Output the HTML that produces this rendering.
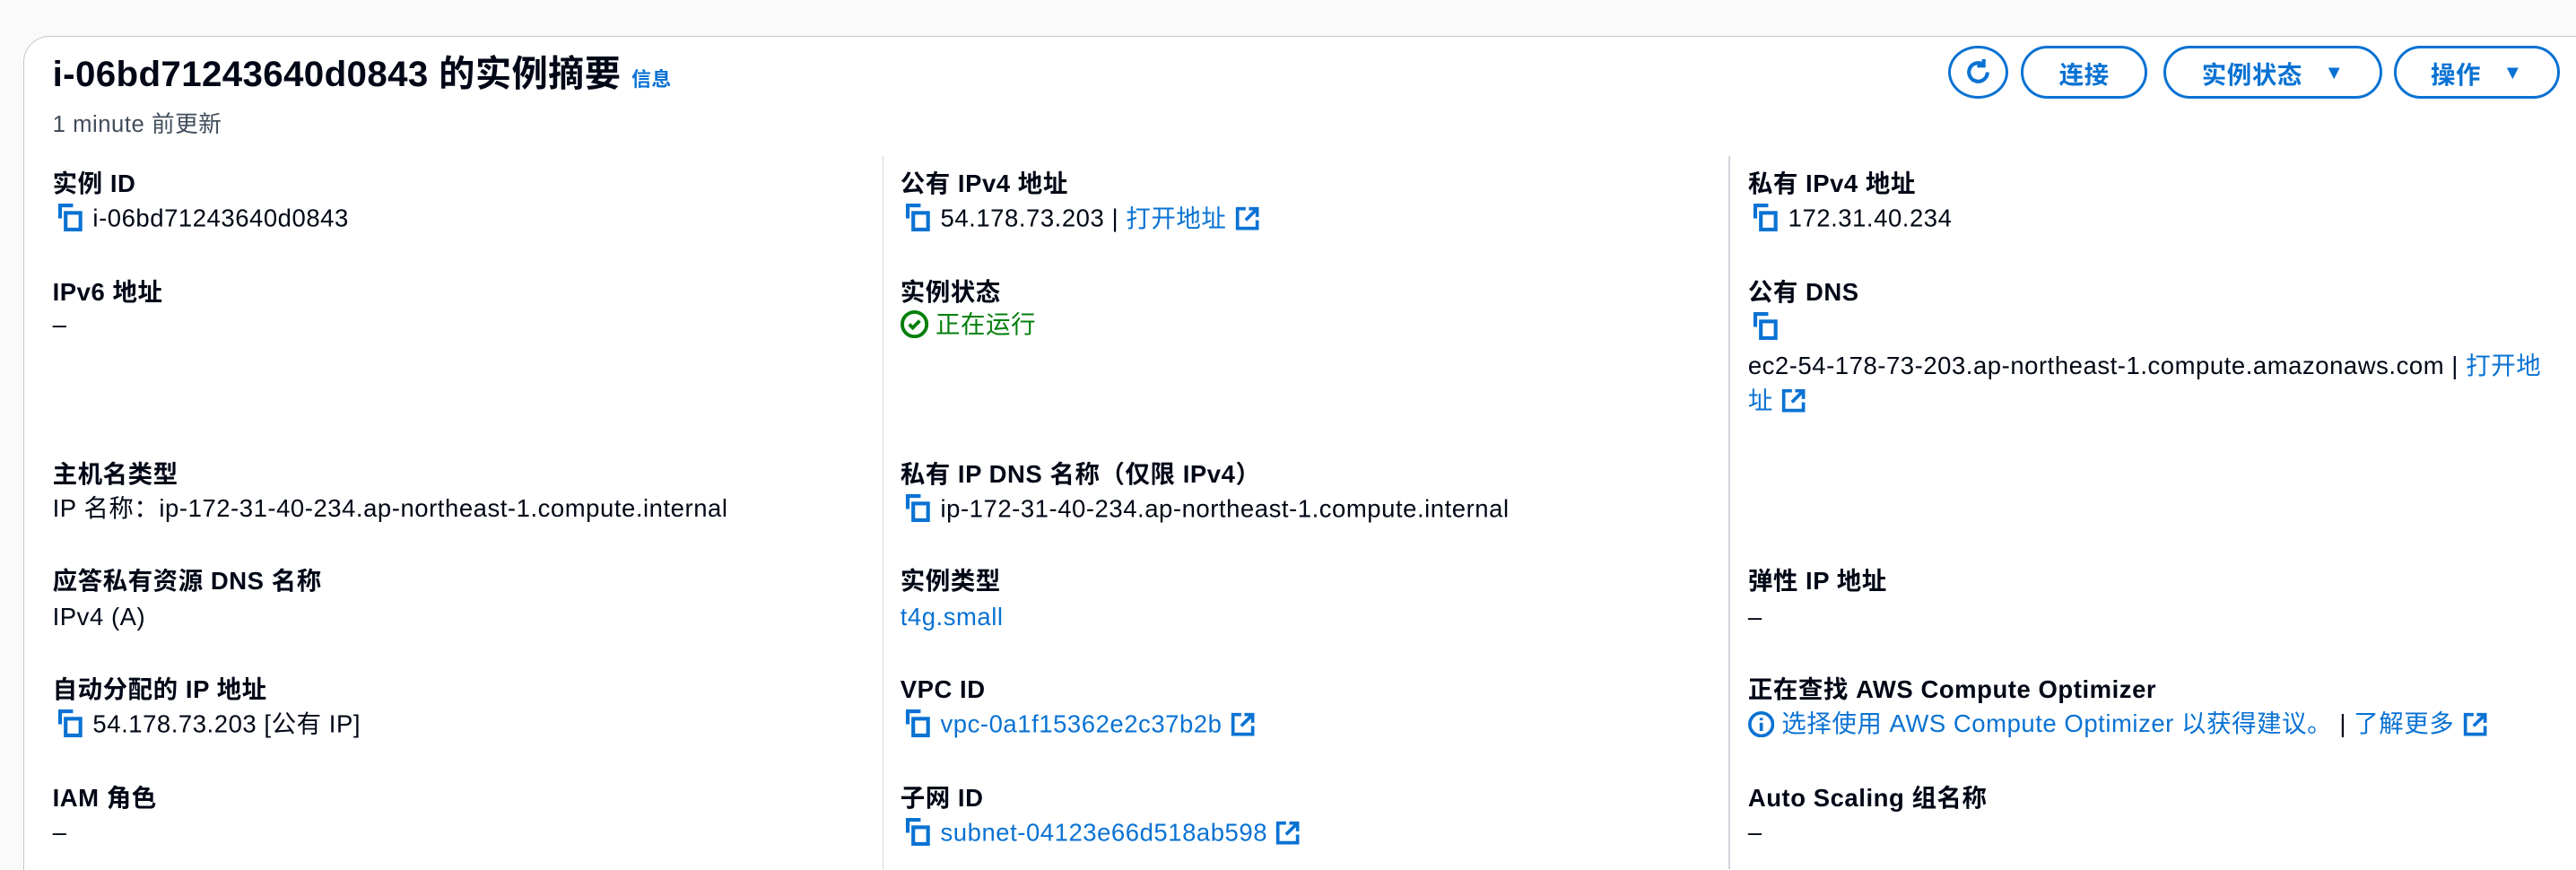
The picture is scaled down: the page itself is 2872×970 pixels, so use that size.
<!DOCTYPE html>
<html><head><meta charset="utf-8"><style>
html{margin:0;padding:0;background:#fafafa;width:2872px;height:970px;overflow:hidden;}
body{margin:0;padding:0;background:#fafafa;width:1568px;height:529px;overflow:hidden;zoom:1.8316;position:relative;font-family:"Liberation Sans","Noto Sans CJK SC",sans-serif;color:#000716;font-size:15px;letter-spacing:0.3px;}
.card{position:absolute;left:14px;top:22px;width:1600px;height:507px;background:#fff;border:1px solid #c6c6cd;border-bottom:none;border-radius:16px 16px 0 0;}
.a{position:absolute;white-space:nowrap;line-height:20px;}
.l{font-weight:bold;}
.b{color:#0972d3;}
.g{color:#037f0c;}
.div{position:absolute;top:95px;width:1px;height:434px;background:#d1d5db;}
.btn{position:absolute;top:28px;height:29px;border:2px solid #0972d3;border-radius:18px;color:#0972d3;font-weight:bold;font-size:15px;display:flex;align-items:center;justify-content:center;box-sizing:content-box;}
svg{vertical-align:-3px;}
</style></head><body>
<div class="card"></div>
<div class="a" style="left:32px;top:32px;font-size:22px;line-height:26px;font-weight:bold;letter-spacing:0.2px;">i-06bd71243640d0843 的实例摘要 <span class="b" style="font-size:12px;font-weight:bold;">信息</span></div>
<div class="a" style="left:32px;top:66px;color:#414d5c;font-size:14px;">1 minute 前更新</div>

<div class="btn" style="left:1186px;width:33px;border-radius:50%;"><svg width="18" height="18" viewBox="0 0 16 16" fill="none" stroke="#0972d3" stroke-width="2"><path d="M13 8a5 5 0 1 1-2-4"/><path d="M11 1v3.5H7.5"/></svg></div>
<div class="btn" style="left:1230px;width:74px;">连接</div>
<div class="btn" style="left:1317px;width:130px;">实例状态&nbsp;&nbsp;&nbsp;<span style="font-size:12px">▼</span></div>
<div class="btn" style="left:1457px;width:98px;">操作&nbsp;&nbsp;&nbsp;<span style="font-size:12px">▼</span></div>

<div class="div" style="left:537px"></div>
<div class="div" style="left:1052px"></div>

<!-- col1 -->
<div class="a l" style="left:32px;top:102px">实例 ID</div>
<div class="a" style="left:32px;top:123px"><svg width="20" height="18" viewBox="0 0 16 16" fill="none" stroke="#0972d3" stroke-width="2"><path d="M3 9V2h7"/><rect x="6" y="6" width="8" height="9"/></svg> i-06bd71243640d0843</div>
<div class="a l" style="left:32px;top:168px">IPv6 地址</div>
<div class="a" style="left:32px;top:188px">–</div>
<div class="a l" style="left:32px;top:279px">主机名类型</div>
<div class="a" style="left:32px;top:300px">IP 名称：ip-172-31-40-234.ap-northeast-1.compute.internal</div>
<div class="a l" style="left:32px;top:344px">应答私有资源 DNS 名称</div>
<div class="a" style="left:32px;top:366px">IPv4 (A)</div>
<div class="a l" style="left:32px;top:410px">自动分配的 IP 地址</div>
<div class="a" style="left:32px;top:431px"><svg width="20" height="18" viewBox="0 0 16 16" fill="none" stroke="#0972d3" stroke-width="2"><path d="M3 9V2h7"/><rect x="6" y="6" width="8" height="9"/></svg> 54.178.73.203 [公有 IP]</div>
<div class="a l" style="left:32px;top:476px">IAM 角色</div>
<div class="a" style="left:32px;top:497px">–</div>

<!-- col2 -->
<div class="a l" style="left:548px;top:102px">公有 IPv4 地址</div>
<div class="a" style="left:548px;top:123px"><svg width="20" height="18" viewBox="0 0 16 16" fill="none" stroke="#0972d3" stroke-width="2"><path d="M3 9V2h7"/><rect x="6" y="6" width="8" height="9"/></svg> 54.178.73.203 | <span class="b">打开地址 <svg width="16" height="16" viewBox="0 0 16 16" fill="none" stroke="#0972d3" stroke-width="2"><path d="M14 9v5H2V2h5"/><path d="M9 2h5v5M14 2L7 9"/></svg></span></div>
<div class="a l" style="left:548px;top:168px">实例状态</div>
<div class="a g" style="left:548px;top:188px"><svg width="17" height="17" viewBox="0 0 16 16" fill="none" stroke="#037f0c" stroke-width="2"><circle cx="8" cy="8" r="7"/><path d="M5 8l2 2 4-4"/></svg> 正在运行</div>
<div class="a l" style="left:548px;top:279px">私有 IP DNS 名称（仅限 IPv4）</div>
<div class="a" style="left:548px;top:300px"><svg width="20" height="18" viewBox="0 0 16 16" fill="none" stroke="#0972d3" stroke-width="2"><path d="M3 9V2h7"/><rect x="6" y="6" width="8" height="9"/></svg> ip-172-31-40-234.ap-northeast-1.compute.internal</div>
<div class="a l" style="left:548px;top:344px">实例类型</div>
<div class="a b" style="left:548px;top:366px">t4g.small</div>
<div class="a l" style="left:548px;top:410px">VPC ID</div>
<div class="a b" style="left:548px;top:431px"><svg width="20" height="18" viewBox="0 0 16 16" fill="none" stroke="#0972d3" stroke-width="2"><path d="M3 9V2h7"/><rect x="6" y="6" width="8" height="9"/></svg> vpc-0a1f15362e2c37b2b <svg width="16" height="16" viewBox="0 0 16 16" fill="none" stroke="#0972d3" stroke-width="2"><path d="M14 9v5H2V2h5"/><path d="M9 2h5v5M14 2L7 9"/></svg></div>
<div class="a l" style="left:548px;top:476px">子网 ID</div>
<div class="a b" style="left:548px;top:497px"><svg width="20" height="18" viewBox="0 0 16 16" fill="none" stroke="#0972d3" stroke-width="2"><path d="M3 9V2h7"/><rect x="6" y="6" width="8" height="9"/></svg> subnet-04123e66d518ab598 <svg width="16" height="16" viewBox="0 0 16 16" fill="none" stroke="#0972d3" stroke-width="2"><path d="M14 9v5H2V2h5"/><path d="M9 2h5v5M14 2L7 9"/></svg></div>

<!-- col3 -->
<div class="a l" style="left:1064px;top:102px">私有 IPv4 地址</div>
<div class="a" style="left:1064px;top:123px"><svg width="20" height="18" viewBox="0 0 16 16" fill="none" stroke="#0972d3" stroke-width="2"><path d="M3 9V2h7"/><rect x="6" y="6" width="8" height="9"/></svg> 172.31.40.234</div>
<div class="a l" style="left:1064px;top:168px">公有 DNS</div>
<div class="a" style="left:1064px;top:189px"><svg width="20" height="18" viewBox="0 0 16 16" fill="none" stroke="#0972d3" stroke-width="2"><path d="M3 9V2h7"/><rect x="6" y="6" width="8" height="9"/></svg></div>
<div class="a" style="left:1064px;top:213px">ec2-54-178-73-203.ap-northeast-1.compute.amazonaws.com | <span class="b">打开地</span></div>
<div class="a b" style="left:1064px;top:234px">址 <svg width="16" height="16" viewBox="0 0 16 16" fill="none" stroke="#0972d3" stroke-width="2"><path d="M14 9v5H2V2h5"/><path d="M9 2h5v5M14 2L7 9"/></svg></div>
<div class="a l" style="left:1064px;top:344px">弹性 IP 地址</div>
<div class="a" style="left:1064px;top:366px">–</div>
<div class="a l" style="left:1064px;top:410px">正在查找 AWS Compute Optimizer</div>
<div class="a" style="left:1064px;top:431px"><span class="b"><svg width="16" height="16" viewBox="0 0 16 16" fill="none" stroke="#0972d3" stroke-width="2"><circle cx="8" cy="8" r="7"/><path d="M8 7v5M8 4v1.5"/></svg> 选择使用 AWS Compute Optimizer 以获得建议。</span> | <span class="b">了解更多 <svg width="16" height="16" viewBox="0 0 16 16" fill="none" stroke="#0972d3" stroke-width="2"><path d="M14 9v5H2V2h5"/><path d="M9 2h5v5M14 2L7 9"/></svg></span></div>
<div class="a l" style="left:1064px;top:476px">Auto Scaling 组名称</div>
<div class="a" style="left:1064px;top:497px">–</div>
</body></html>
